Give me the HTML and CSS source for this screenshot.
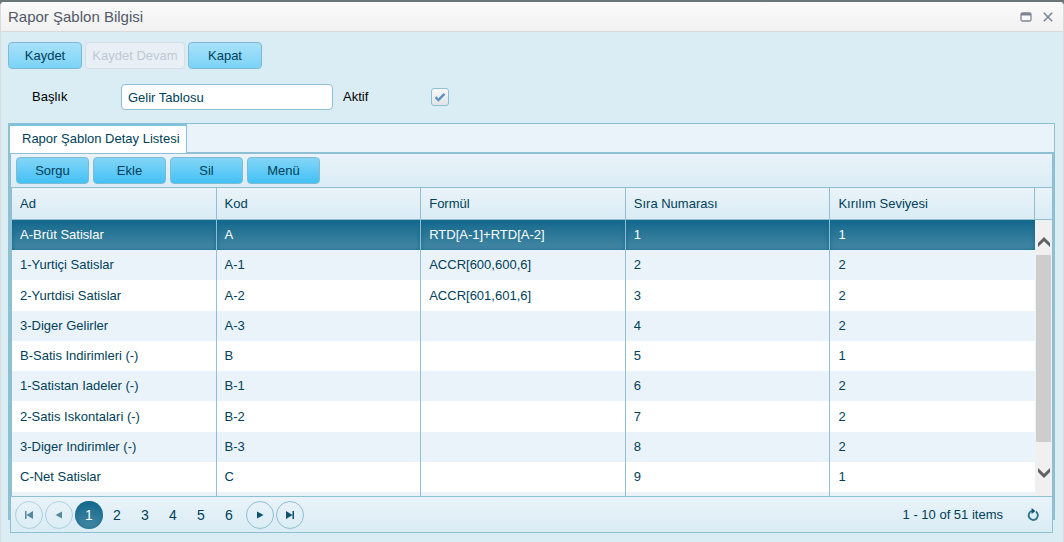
FILE: index.html
```html
<!DOCTYPE html>
<html lang="tr">
<head>
<meta charset="utf-8">
<title>Rapor Şablon Bilgisi</title>
<link rel="stylesheet" href="styles.css">
</head>
<body>
<main class="window">
  <header class="titlebar">
    <h1 class="title">Rapor Şablon Bilgisi</h1>
    <button class="window-action" type="button" aria-label="Büyüt">
      <svg width="12" height="10" viewBox="0 0 12 10"><rect x="1" y="1" width="10" height="8" rx="1.5" fill="#f8f9fa" stroke="#7d8793" stroke-width="1.3"/><path d="M1 1h10v2.6H1z" fill="#7d8793"/></svg>
    </button>
    <button class="window-action" type="button" aria-label="Kapat">
      <svg width="10" height="10" viewBox="0 0 10 10"><path d="M.8.8l8.400 8.400M9.200.8L.8 9.200" stroke="#7d8793" stroke-width="1.600"/></svg>
    </button>
  </header>
  <div class="content">
    <div class="actions">
      <button class="btn btn-light" type="button">Kaydet</button>
      <button class="btn btn-wide" type="button" disabled>Kaydet Devam</button>
      <button class="btn btn-light" type="button">Kapat</button>
    </div>
    <form class="form">
      <label class="label-title" for="baslik">Başlık</label>
      <input class="textbox" id="baslik" type="text" value="Gelir Tablosu">
      <label class="label-active" for="aktif">Aktif</label>
      <span class="check">
        <input class="check-input" id="aktif" type="checkbox" checked>
        <svg class="check-mark" width="12" height="10" viewBox="0 0 12 10"><path d="M1.5 5.2L4.4 8 10.5 1.8" fill="none" stroke="#5b93c5" stroke-width="2.4"/></svg>
      </span>
    </form>
    <section class="tabs">
      <div class="tab-strip" role="tablist">
        <button class="tab" type="button" role="tab" aria-selected="true">Rapor Şablon Detay Listesi</button>
      </div>
      <div class="panel" role="tabpanel">
        <div class="grid">
          <div class="toolbar">
            <button class="btn" type="button">Sorgu</button>
            <button class="btn" type="button">Ekle</button>
            <button class="btn" type="button">Sil</button>
            <button class="btn" type="button">Menü</button>
          </div>
          <div class="grid-content">
            <table class="table">
              <thead>
                <tr><th>Ad</th><th>Kod</th><th>Formül</th><th>Sıra Numarası</th><th>Kırılım Seviyesi</th></tr>
              </thead>
              <tbody>
                <tr class="selected"><td>A-Brüt Satislar</td><td>A</td><td>RTD[A-1]+RTD[A-2]</td><td>1</td><td>1</td></tr>
                <tr><td>1-Yurtiçi Satislar</td><td>A-1</td><td>ACCR[600,600,6]</td><td>2</td><td>2</td></tr>
                <tr><td>2-Yurtdisi Satislar</td><td>A-2</td><td>ACCR[601,601,6]</td><td>3</td><td>2</td></tr>
                <tr><td>3-Diger Gelirler</td><td>A-3</td><td></td><td>4</td><td>2</td></tr>
                <tr><td>B-Satis Indirimleri (-)</td><td>B</td><td></td><td>5</td><td>1</td></tr>
                <tr><td>1-Satistan Iadeler (-)</td><td>B-1</td><td></td><td>6</td><td>2</td></tr>
                <tr><td>2-Satis Iskontalari (-)</td><td>B-2</td><td></td><td>7</td><td>2</td></tr>
                <tr><td>3-Diger Indirimler (-)</td><td>B-3</td><td></td><td>8</td><td>2</td></tr>
                <tr><td>C-Net Satislar</td><td>C</td><td></td><td>9</td><td>1</td></tr>
                <tr class="partial"><td></td><td></td><td></td><td></td><td></td></tr>
              </tbody>
            </table>
            <div class="side">
              <div class="side-head"></div>
              <div class="scrollbar">
                <svg width="12" height="10" viewBox="0 0 12 10"><path d="M0 6L6 0l6 6v4L6 4.300 0 10z" fill="#5f6163"/></svg>
                <div class="thumb"></div>
                <svg width="12" height="10" viewBox="0 0 12 10"><path d="M0 4l6 6 6-6V0L6 5.700 0 0z" fill="#5f6163"/></svg>
              </div>
            </div>
          </div>
          <nav class="pager">
            <button class="round" type="button" disabled aria-label="İlk sayfa"><svg width="8" height="8" viewBox="0 0 8 8"><path d="M0 0h1.5v8H0zM8 0v8L1.5 4z"/></svg></button>
            <button class="round" type="button" disabled aria-label="Önceki sayfa"><svg width="8" height="8" viewBox="0 0 8 8"><path d="M7 .5v7L.5 4z"/></svg></button>
            <span class="page current" aria-current="page">1</span>
            <a class="page" href="#">2</a>
            <a class="page" href="#">3</a>
            <a class="page" href="#">4</a>
            <a class="page" href="#">5</a>
            <a class="page" href="#">6</a>
            <button class="round" type="button" aria-label="Sonraki sayfa"><svg width="8" height="8" viewBox="0 0 8 8"><path d="M1 .5v7L7.500 4z"/></svg></button>
            <button class="round" type="button" aria-label="Son sayfa"><svg width="8" height="8" viewBox="0 0 8 8"><path d="M6.500 0H8v8H6.500zM0 0v8l6.500-4z"/></svg></button>
            <span class="info">1 - 10 of 51 items</span>
            <button class="refresh" type="button" aria-label="Yenile"><svg width="12" height="14" viewBox="0 0 12 14"><path d="M8.800 3.500A4.600 4.600 0 1 1 5 2.900" fill="none" stroke="#2f7590" stroke-width="1.900"/><path d="M4.600 0v6L8.400 3z" fill="#0b5370"/></svg></button>
          </nav>
        </div>
      </div>
    </section>
  </div>
</main>
</body>
</html>
```
FILE: styles.css
```css
* {
  box-sizing: border-box;
}

body {
  margin: 0;
  padding-top: 2px;
  background: #6b7578;
  color: #003f59;
  font: 13px/16px "Liberation Sans", Arial, sans-serif;
}

button,
input {
  margin: 0;
  padding: 0;
  font: inherit;
  color: inherit;
}

svg {
  display: block;
}

.window {
  min-height: calc(100vh - 2px);
  border: solid #dbdbde;
  border-width: 0 1px;
  border-radius: 4px 4px 0 0;
  background: #daecf4;
  overflow: hidden;
}

.titlebar {
  display: flex;
  align-items: center;
  gap: 11px;
  height: 30px;
  padding: 0 10px 0 7px;
  border-bottom: 1px solid #d9d9dc;
  background: linear-gradient(#fafafa, #f1f1f2);
}

.title {
  flex: 1;
  margin: 0;
  font-size: 15px;
  font-weight: 400;
  line-height: 20px;
  color: #515967;
}

.window-action,
.refresh {
  border: 0;
  background: none;
}

.content {
  padding: 10px 8px 21px 7px;
}

.actions {
  display: flex;
  gap: 3px;
}

.btn {
  width: 73px;
  height: 27px;
  border: 1px solid #7fb9d2;
  border-radius: 4px;
  background: linear-gradient(#83d5f7, #43c1f5);
}

.btn-light {
  width: 74px;
  background: linear-gradient(#a9e1f9, #7bd3f8);
}

.btn-wide {
  width: 100px;
}

.btn:disabled {
  border-color: #d8dee6;
  background: #e9f0f5;
  color: #bdc8d6;
}

.form {
  display: flex;
  align-items: center;
  padding: 15px 0 13px 24px;
  color: #000;
}

.label-title {
  width: 89px;
}

.textbox {
  width: 212px;
  height: 26px;
  padding: 0 6px;
  border: 1px solid #8ebfd2;
  border-radius: 4px;
  background: #fff;
  color: #003f59;
}

.label-active {
  width: 88px;
  margin-left: 10px;
}

.check {
  display: grid;
  place-items: center;
}

.check-input,
.check-mark {
  grid-area: 1 / 1;
}

.check-input {
  width: 18px;
  height: 18px;
  appearance: none;
  border: 1px solid #8ebfd2;
  border-radius: 3px;
  background: linear-gradient(#f8f9fb, #e2e4e9);
}

.check-mark {
  pointer-events: none;
  visibility: hidden;
}

.check-input:checked + .check-mark {
  visibility: visible;
}

.tabs {
  border: solid #8ebfd2;
  border-width: 1px 1px 0 2px;
}

.tab-strip {
  display: flex;
  height: 30px;
  border-bottom: 2px solid #8ebfd2;
  background: #eaf3fa;
}

.tab {
  height: 29px;
  padding: 0 6px 2px 12px;
  border: solid #7dc3e0;
  border-width: 2px 1px 0 0;
  background: #fff;
}

.panel {
  display: flow-root;
  padding-right: 1px;
  background: #8ebfd2;
}

/* The grid runs past the end of the panel's side rails. */
.grid {
  margin-bottom: -13px;
  border: 1px solid #8ebfd2;
  border-top: 0;
}

.toolbar {
  display: flex;
  gap: 4px;
  padding: 3px 5px;
  background: linear-gradient(#eaf3f9, #daecf4);
}

.grid-content {
  display: flex;
  padding: 1px 0 1px 1px;
}

.table {
  width: 100%;
  min-width: 0;
  table-layout: fixed;
  border-collapse: separate;
  border-spacing: 0;
  background: #fff;
}

.table th,
.table td {
  height: 30px;
  padding: 0 8px;
  border-right: 1px solid #8ebfd2;
  text-align: left;
  font-weight: 400;
}

.table th {
  height: 32px;
  border-bottom: 1px solid #8ebfd2;
}

.table td:last-child {
  border-right: 0;
}

.table thead th,
.side-head {
  background: linear-gradient(#eaf3f9, #daecf4);
}

.table tr:nth-child(4n + 3) td {
  height: 31px;
}

.table tbody tr:nth-child(even) {
  background: #eaf3f9;
}

.table .selected td {
  background: linear-gradient(#13688c, #4688a5);
  box-shadow: inset 0 0 4px #13688c;
  color: #fff;
}

.table .partial td {
  height: 4px;
}

.side {
  display: flex;
  flex-direction: column;
  flex-shrink: 0;
  width: 17px;
}

.side-head {
  height: 32px;
  border-bottom: 1px solid #8ebfd2;
}

.scrollbar {
  display: flex;
  flex: 1;
  flex-direction: column;
  align-items: center;
  gap: 8px;
  padding: 17px 0 18px;
  background: #f0f0f0;
}

.thumb {
  flex: 1;
  width: 15px;
  margin-bottom: 18px;
  background: #cdcdcd;
}

.pager {
  display: flex;
  align-items: center;
  gap: 2px;
  padding: 4px 13px 3px 4px;
  background: linear-gradient(#eaf3f9, #daecf4);
}

.round,
.page {
  display: grid;
  place-items: center;
  width: 28px;
  height: 28px;
  border-radius: 50%;
}

.round {
  border: 1px solid #8ebfd2;
  background: transparent;
  fill: #0b5370;
}

.round:disabled {
  opacity: 0.65;
}

.page {
  margin-right: -2px;
  font-size: 14px;
  color: inherit;
  text-decoration: none;
}

.page + .round {
  margin-left: 3px;
}

.current {
  background: linear-gradient(#13688c, #4688a5);
  box-shadow: inset 0 0 4px #13688c;
  color: #fff;
}

.info {
  margin-left: auto;
  padding-right: 22px;
}
```
